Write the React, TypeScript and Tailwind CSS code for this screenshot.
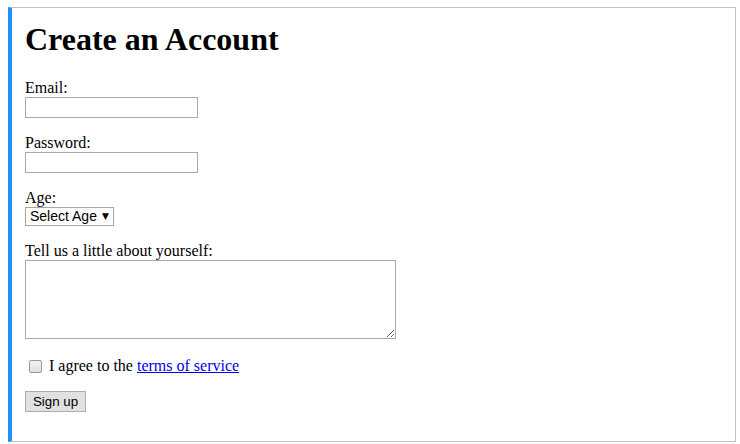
export default function App() {
  return (
    <div className="bg-white pt-[7px] pl-[8px] font-['Liberation_Serif',serif] text-[16px] text-black">
      <div className="w-[728px] border border-l-4 border-[#c2c2c2] border-l-[#1e90ff] px-[13px] pt-[13px] pb-[29px]">
        <h1 className="mb-[22px] text-[32px] leading-[36px] font-bold">Create an Account</h1>
        <form className="flex flex-col items-start" onSubmit={(e) => e.preventDefault()}>
          <label htmlFor="email" className="block leading-[18px]">Email:</label>
          <input
            id="email"
            type="email"
            className="block h-[21px] w-[173px] border border-[#a9a9a9] px-[2px] font-['Liberation_Sans',sans-serif] text-[13px] outline-none"
          />

          <label htmlFor="password" className="mt-[16px] block leading-[18px]">Password:</label>
          <input
            id="password"
            type="password"
            className="block h-[21px] w-[173px] border border-[#a9a9a9] px-[2px] font-['Liberation_Sans',sans-serif] text-[13px] outline-none"
          />

          <label htmlFor="age" className="mt-[16px] block leading-[18px]">Age:</label>
          <div className="relative flex">
            <select
              id="age"
              defaultValue=""
              className="block h-[19px] w-[89px] appearance-none border border-[#a6a6a6] bg-white pl-[4px] font-['Liberation_Sans',sans-serif] text-[14px] leading-[17px] outline-none"
            >
              <option value="">Select Age</option>
              <option value="18">18-24</option>
              <option value="25">25-34</option>
              <option value="35">35+</option>
            </select>
            <span className="pointer-events-none absolute top-[4px] right-[5px] font-['DejaVu_Sans',sans-serif] text-[9px] leading-[11px]">▼</span>
          </div>

          <label htmlFor="about" className="mt-[16px] block leading-[18px]">Tell us a little about yourself:</label>
          <textarea
            id="about"
            className="block h-[79px] w-[371px] border border-[#a9a9a9] p-[2px] font-['Liberation_Mono',monospace] text-[13px] outline-none"
          />

          <div className="mt-[18px] flex h-[18px] items-center">
            <input
              id="tos"
              type="checkbox"
              className="mr-[7px] ml-[4px] h-[13px] w-[13px] appearance-none rounded-[2px] border border-[#999] bg-gradient-to-b from-[#f4f4f4] to-[#dedede]"
            />
            <label htmlFor="tos">
              I agree to the{" "}
              <a href="#" className="text-[#0000ee] underline">terms of service</a>
            </label>
          </div>

          <button
            type="submit"
            className="mt-[16px] h-[21px] w-[61px] border border-[#adadad] bg-[#e1e1e1] font-['Liberation_Sans',sans-serif] text-[13.33px] leading-[19px]"
          >
            Sign up
          </button>
        </form>
      </div>
    </div>
  );
}
